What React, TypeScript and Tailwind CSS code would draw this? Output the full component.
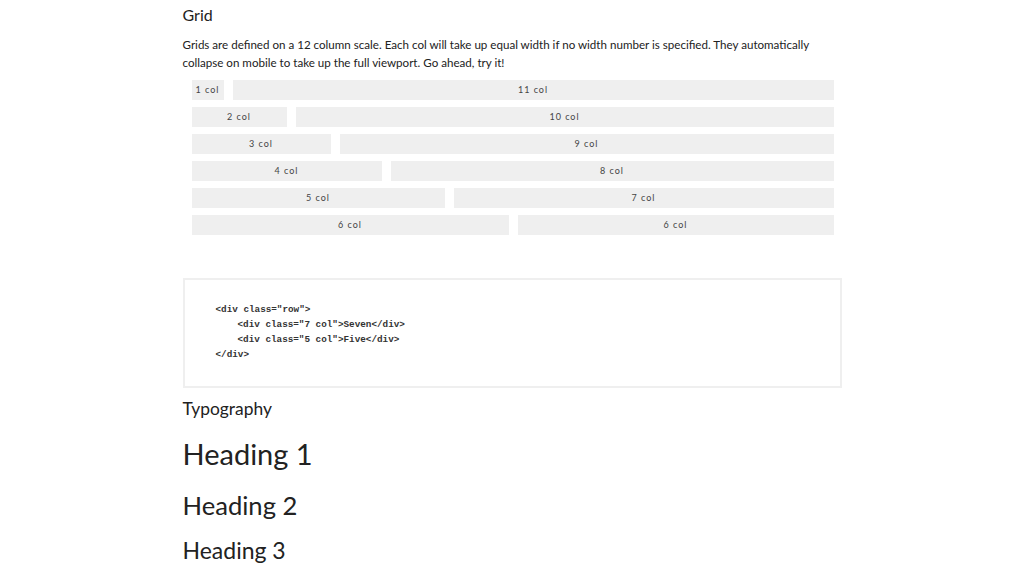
import React from 'react';

const rows = [
  { left: 32, a: '1 col', b: '11 col' },
  { left: 95, a: '2 col', b: '10 col' },
  { left: 139, a: '3 col', b: '9 col' },
  { left: 190, a: '4 col', b: '8 col' },
  { left: 253, a: '5 col', b: '7 col' },
  { left: 317, a: '6 col', b: '6 col' },
];

function Cell({ label, width }: { label: string; width?: number }) {
  return (
    <div
      className={`h-[20px] bg-[#efefef] flex items-center justify-center text-[9px] tracking-[1px] text-[#444] ${width ? 'shrink-0' : 'flex-1'}`}
      style={width ? { width } : undefined}
    >
      {label}
    </div>
  );
}

export default function App() {
  return (
    <div className="min-h-screen bg-white text-[#222] font-['Lato','Noto_Sans',sans-serif]">
      <div className="mx-auto w-[659px]">
        {/* Grid section */}
        <h2 className="pt-[5px] text-[16px] leading-[20px]">Grid</h2>
        <p className="mt-[11px] text-[11.6px] leading-[18px]">
          Grids are defined on a 12 column scale. Each col will take up equal width if no width number is specified. They automatically
          <br />
          collapse on mobile to take up the full viewport. Go ahead, try it!
        </p>

        <div className="mt-[8px] ml-[9px] mr-[8px] flex flex-col gap-[7px]">
          {rows.map((r) => (
            <div key={r.a} className="flex gap-[9px]">
              <Cell label={r.a} width={r.left} />
              <Cell label={r.b} />
            </div>
          ))}
        </div>

        {/* Code sample */}
        <div className="mt-[43px] h-[110px] border-2 border-[#efefef] pt-[22px] pl-[31px] font-['Liberation_Mono',monospace] text-[9.3px] leading-[15px] font-bold text-[#333]">
          <div>{'<div class="row">'}</div>
          <div className="pl-[22px]">{'<div class="7 col">Seven</div>'}</div>
          <div className="pl-[22px]">{'<div class="5 col">Five</div>'}</div>
          <div>{'</div>'}</div>
        </div>

        {/* Typography */}
        <h2 className="mt-[10px] text-[17.4px] leading-[22px]">Typography</h2>
        <h1 className="mt-[17px] text-[29px] leading-[34px]">Heading 1</h1>
        <h2 className="mt-[19px] text-[25.6px] leading-[30px]">Heading 2</h2>
        <h3 className="mt-[16px] text-[23px] leading-[28px]">Heading 3</h3>
      </div>
    </div>
  );
}
